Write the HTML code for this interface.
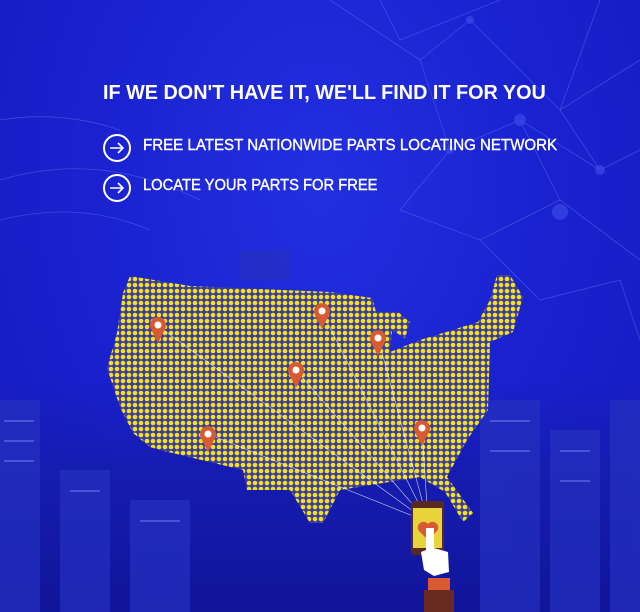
<!DOCTYPE html>
<html><head><meta charset="utf-8"><style>
html,body{margin:0;padding:0}
body{width:640px;height:612px;overflow:hidden;position:relative;background:#1a22cc;font-family:"Liberation Sans",Arial,sans-serif}
.bg{position:absolute;inset:0;background:radial-gradient(ellipse at 50% 30%,#2230e0 0%,#1a22d0 50%,#1519bc 100%)}
.city{position:absolute;left:0;top:380px;width:640px;height:232px;background:linear-gradient(#1a22cc00,#161cb0 40%,#11159a)}
.t{position:absolute;color:#fff;font-weight:bold;white-space:nowrap;transform-origin:0 0}
.c{position:absolute;width:24px;height:24px;border:2px solid #fff;border-radius:50%;left:103px}
.c svg{position:absolute;left:4px;top:5px}
</style></head><body>
<div class="bg"></div>
<svg style="position:absolute;left:0;top:0" width="640" height="612">
<defs>
<pattern id="d" width="6" height="6" patternUnits="userSpaceOnUse"><rect width="6" height="6" fill="#3a3aa8"/><circle cx="3" cy="3" r="2.3" fill="#f4e40c"/></pattern>
</defs>
<g stroke="#5a6cf0" stroke-width="0.8" opacity="0.55" fill="none">
<path d="M330 0 L420 60 L470 20 L560 110 L640 60 M420 60 L450 150 L520 120 L600 170 L640 150 M450 150 L400 210 L480 240 L560 200 L640 260 M560 110 L600 170 M480 240 L540 300 L620 280 M380 0 L400 40 L500 0 M600 0 L560 110 M620 280 L640 340 M520 120 L560 200"/>
<path d="M0 180 Q100 150 200 200 M0 220 Q80 200 150 230 M0 120 Q60 110 120 130"/>
</g>
<g fill="#3a48e8" opacity="0.7"><circle cx="560" cy="212" r="8"/><circle cx="520" cy="120" r="6"/><circle cx="450" cy="150" r="4"/><circle cx="600" cy="170" r="5"/><circle cx="470" cy="20" r="4"/></g>
</svg>
<div class="city"></div>
<svg style="position:absolute;left:0;top:0" width="640" height="612">
<g fill="#2530c0" opacity="0.7">
<rect x="0" y="400" width="40" height="212"/><rect x="60" y="470" width="50" height="142"/><rect x="130" y="500" width="60" height="112"/><rect x="480" y="400" width="60" height="212"/><rect x="550" y="430" width="50" height="182"/><rect x="610" y="400" width="30" height="212"/><rect x="240" y="250" width="50" height="30"/>
</g>
<g fill="#8890ff" opacity="0.4">
<rect x="4" y="420" width="30" height="2"/><rect x="4" y="440" width="30" height="2"/><rect x="4" y="460" width="30" height="2"/><rect x="490" y="420" width="40" height="2"/><rect x="490" y="450" width="40" height="2"/><rect x="560" y="450" width="30" height="2"/><rect x="560" y="480" width="30" height="2"/><rect x="70" y="490" width="30" height="2"/><rect x="140" y="520" width="40" height="2"/>
</g>
<path fill="url(#d)" d="M123 293 L130 276 L190 286 L330 292 L372 298 L376 312 L398 312 L410 322 L405 338 L392 330 L390 352 L420 340 L443 333 L478 322 L490 300 L497 275 L510 275 L523 297 L513 332 L490 342 L488 410 L467 440 L447 477 L473 513 L463 522 L445 492 L420 477 L340 490 L323 523 L310 523 L290 490 L247 490 L243 470 L160 450 L150 447 L133 433 L120 407 L107 368 L117 333 Z"/>
<g stroke="#fff" stroke-width="0.6" opacity="0.8">
<line x1="158" y1="326" x2="428" y2="522"/><line x1="322" y1="312" x2="428" y2="522"/><line x1="378" y1="338" x2="428" y2="522"/><line x1="296" y1="370" x2="428" y2="522"/><line x1="208" y1="434" x2="428" y2="522"/><line x1="422" y1="428" x2="428" y2="522"/>
</g>
<g fill="#d85a32">
<g transform="translate(158,325)"><path d="M0 18 L-7 4 A8 8 0 1 1 7 4 Z"/><circle r="3.5" fill="#fff"/></g>
<g transform="translate(322,311)"><path d="M0 18 L-7 4 A8 8 0 1 1 7 4 Z"/><circle r="3.5" fill="#fff"/></g>
<g transform="translate(378,338)"><path d="M0 18 L-7 4 A8 8 0 1 1 7 4 Z"/><circle r="3.5" fill="#fff"/></g>
<g transform="translate(296,370)"><path d="M0 18 L-7 4 A8 8 0 1 1 7 4 Z"/><circle r="3.5" fill="#fff"/></g>
<g transform="translate(208,434)"><path d="M0 18 L-7 4 A8 8 0 1 1 7 4 Z"/><circle r="3.5" fill="#fff"/></g>
<g transform="translate(422,428)"><path d="M0 18 L-7 4 A8 8 0 1 1 7 4 Z"/><circle r="3.5" fill="#fff"/></g>
</g>
<rect x="411" y="501" width="33" height="54" rx="3" fill="#5a2a20"/>
<rect x="413" y="508" width="29" height="40" fill="#e6d43a"/>
<path d="M428 540 L419 531 A5 5 0 0 1 428 524 A5 5 0 0 1 437 531 Z" fill="#d85a32"/>
<path d="M426 528 L434 528 L434 548 L448 552 L449 572 L434 576 L424 570 L421 552 L426 550 Z" fill="#fff"/>
<rect x="428" y="578" width="22" height="12" fill="#d85a32"/>
<rect x="424" y="590" width="30" height="22" fill="#6a2a22"/>
</svg>
<div class="t" style="left:103px;top:82px;font-size:20px;transform:scaleX(0.99)">IF WE DON'T HAVE IT, WE'LL FIND IT FOR YOU</div>
<div class="c" style="top:134px"><svg width="16" height="14" viewBox="0 0 16 14"><path d="M1 7 H14 M9 2 L14 7 L9 12" stroke="#fff" stroke-width="1.6" fill="none"/></svg></div>
<div class="c" style="top:174px"><svg width="16" height="14" viewBox="0 0 16 14"><path d="M1 7 H14 M9 2 L14 7 L9 12" stroke="#fff" stroke-width="1.6" fill="none"/></svg></div>
<div class="t" style="left:143px;top:137px;font-size:16px;font-weight:normal;-webkit-text-stroke:0.4px #fff;transform:scaleX(0.943)">FREE LATEST NATIONWIDE PARTS LOCATING NETWORK</div>
<div class="t" style="left:143px;top:177px;font-size:16px;font-weight:normal;-webkit-text-stroke:0.4px #fff;transform:scaleX(0.92)">LOCATE YOUR PARTS FOR FREE</div>
</body></html>
